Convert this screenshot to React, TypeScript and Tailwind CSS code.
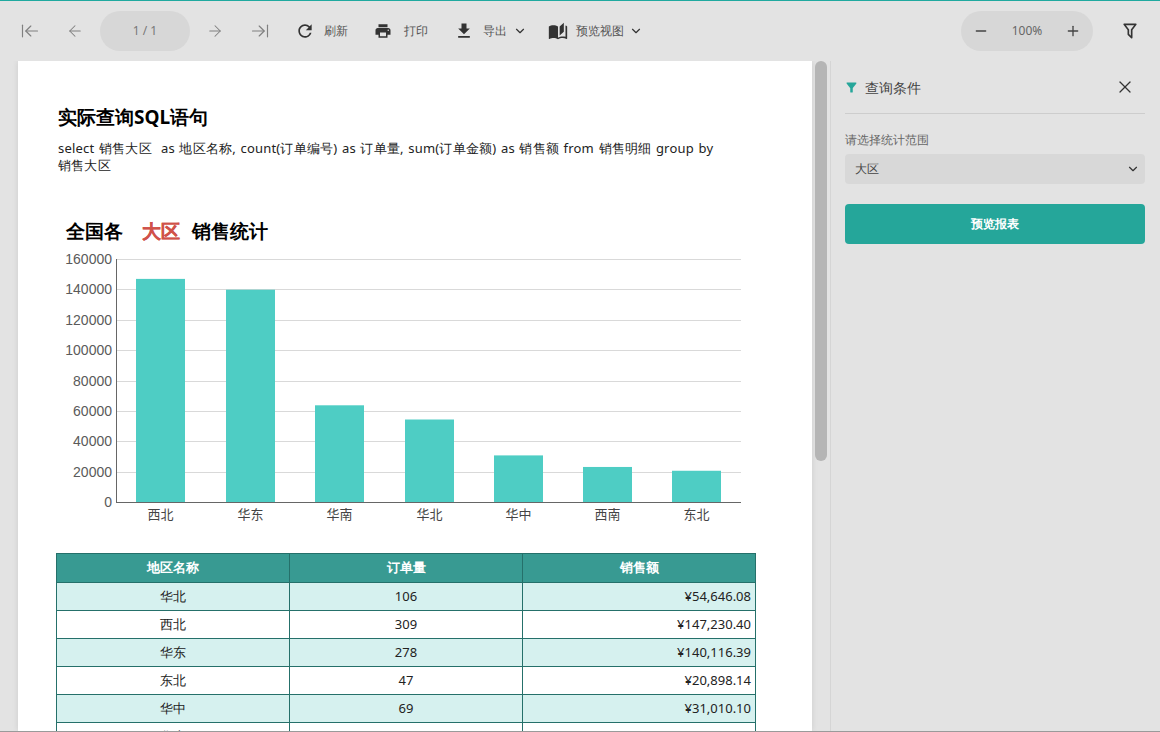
import { ArrowLeft, ArrowRight, ArrowLeftToLine, ArrowRightToLine, ChevronDown, Minus, Plus, X } from "lucide-react";
import { MdPrint, MdFileDownload, MdFilterAlt, MdRefresh } from "react-icons/md";

const font = "font-['Open_Sans','Noto_Sans_CJK_SC',sans-serif]";

const bars = [
  { name: "西北", value: 147230, x: 136 },
  { name: "华东", value: 140116, x: 226 },
  { name: "华南", value: 64000, x: 315 },
  { name: "华北", value: 54646, x: 405 },
  { name: "华中", value: 31010, x: 494 },
  { name: "西南", value: 23400, x: 583 },
  { name: "东北", value: 20898, x: 672 },
];

const ticks = [160000, 140000, 120000, 100000, 80000, 60000, 40000, 20000, 0];

const rows = [
  ["华北", "106", "¥54,646.08"],
  ["西北", "309", "¥147,230.40"],
  ["华东", "278", "¥140,116.39"],
  ["东北", "47", "¥20,898.14"],
  ["华中", "69", "¥31,010.10"],
  ["华南", "118", "¥63,836.78"],
];

function Chart() {
  // svg origin is at 56,250 on the page
  const y0 = 252.5;
  const h = 243;
  return (
    <svg width="700" height="278" className="block" style={{ fontFamily: "'Liberation Sans','Noto Sans CJK SC',sans-serif" }}>
      {ticks.map((t, i) => {
        const y = 9.5 + Math.round((i * h) / 8);
        return (
          <g key={t}>
            {t !== 0 && <line x1="60" x2="685" y1={y} y2={y} stroke="#d9d9d9" />}
            <text x="56" y={y + 4.5} textAnchor="end" fontSize="14" fill="#5a5a5a">
              {t}
            </text>
          </g>
        );
      })}
      {bars.map((b) => {
        const bh = (b.value / 160000) * h;
        return (
          <g key={b.name}>
            <rect x={b.x - 56} y={y0 - bh} width="49" height={bh} fill="#4ecdc4" />
            <text x={b.x - 56 + 24.5} y="269" textAnchor="middle" fontSize="13" fill="#444">
              {b.name}
            </text>
          </g>
        );
      })}
      <line x1="60.5" x2="60.5" y1="9" y2={y0} stroke="#666" />
      <line x1="60" x2="685" y1={y0} y2={y0} stroke="#666" />
    </svg>
  );
}

function ToolText({ children }: { children: string }) {
  return <span className="text-xs text-[#555]">{children}</span>;
}

export default function App() {
  return (
    <div className={`h-screen flex flex-col overflow-hidden bg-[#e3e3e3] border-t border-[#1fa99f] border-b border-b-[#9a9a9a] ${font}`}>
      <div className="h-[60px] shrink-0 flex items-center text-[#808080]">
        <div className="w-[60px] flex justify-center"><ArrowLeftToLine size={20} strokeWidth={1.4} /></div>
        <div className="w-[30px] flex justify-center"><ArrowLeft size={18} strokeWidth={1.4} /></div>
        <div className="ml-[10px] w-[90px] h-10 rounded-full bg-[#d7d7d7] flex items-center justify-center text-xs text-[#777]">1 / 1</div>
        <div className="w-[50px] flex justify-center"><ArrowRight size={18} strokeWidth={1.4} /></div>
        <div className="w-[42px] flex justify-center -ml-[1px]"><ArrowRightToLine size={20} strokeWidth={1.4} /></div>
        <div className="ml-[14px] flex items-center gap-[9px] text-[#333]">
          <MdRefresh size={20} />
          <ToolText>刷新</ToolText>
        </div>
        <div className="ml-[26px] flex items-center gap-[12px] text-[#333]">
          <MdPrint size={18} />
          <ToolText>打印</ToolText>
        </div>
        <div className="ml-[26px] flex items-center gap-[9px] text-[#333]">
          <MdFileDownload size={20} />
          <ToolText>导出</ToolText>
          <ChevronDown size={14} className="-ml-[3px]" />
        </div>
        <div className="ml-[21px] flex items-center gap-[8px] text-[#333]">
          <svg width="20" height="20" viewBox="0 0 24 24" fill="currentColor">
            <path d="M19 2L14 6.5V17.5L19 13V2M6.5 5C4.55 5 2.45 5.4 1 6.5V21.16C1 21.41 1.25 21.66 1.5 21.66C1.6 21.66 1.65 21.59 1.75 21.59C3.1 20.94 5.05 20.5 6.5 20.5C8.45 20.5 10.55 20.9 12 22C13.35 21.15 15.8 20.5 17.5 20.5C19.15 20.5 20.85 20.81 22.25 21.56C22.35 21.61 22.4 21.59 22.5 21.59C22.75 21.59 23 21.34 23 21.09V6.5C22.4 6.05 21.75 5.75 21 5.5V19C19.9 18.65 18.7 18.5 17.5 18.5C15.8 18.5 13.35 19.15 12 20V6.5C10.55 5.4 8.45 5 6.5 5Z" />
          </svg>
          <ToolText>预览视图</ToolText>
          <ChevronDown size={14} className="-ml-[3px]" />
        </div>
        <div className="ml-auto w-[132px] h-10 rounded-full bg-[#d7d7d7] flex items-center justify-between px-3 text-[#444]">
          <Minus size={16} />
          <span className="text-xs text-[#666]">100%</span>
          <Plus size={16} />
        </div>
        <div className="w-[67px] pl-[7px] flex justify-center text-[#333]">
          <svg width="20" height="20" viewBox="0 0 24 24" fill="currentColor">
            <path d="M15,19.88C15.04,20.18 14.94,20.5 14.71,20.71C14.32,21.1 13.69,21.1 13.3,20.71L9.29,16.7C9.06,16.47 8.96,16.16 9,15.87V10.75L4.21,4.62C3.87,4.19 3.95,3.56 4.38,3.22C4.57,3.08 4.78,3 5,3V3H19V3C19.22,3 19.43,3.08 19.62,3.22C20.05,3.56 20.13,4.19 19.79,4.62L15,10.75V19.88M7.04,5L11,10.06V15.58L13,17.58V10.05L16.96,5H7.04Z" />
          </svg>
        </div>
      </div>

      <div className="flex-1 flex min-h-0">
        <div className="flex-1 flex min-w-0 overflow-hidden">
          <div className="ml-[18px] w-[794px] shrink-0 bg-white pl-10 pt-[42px] shadow-[0_0_6px_rgba(0,0,0,0.1)] text-black">
            <h2 className="text-[19px] font-bold leading-[28px]">实际查询SQL语句</h2>
            <p className="mt-[9px] w-[660px] text-[13px] leading-[17px] tracking-[0.2px] [word-spacing:1px] text-[#222]">
              select 销售大区&nbsp;&nbsp;as 地区名称, count(订单编号) as 订单量, sum(订单金额) as 销售额 from 销售明细 group by 销售大区
            </p>
            <div className="mt-[40px] ml-2 h-[34px] flex items-center text-[18.5px] font-bold">
              <span>全国各</span>
              <span className="ml-[19px] text-[#d0524a] [-webkit-text-stroke:0.3px]">大区</span>
              <span className="ml-[12px]">销售统计</span>
            </div>
            <div className="-ml-[2px] mt-[2px]"><Chart /></div>
            <table className="-ml-[2px] mt-[25px] w-[700px] table-fixed border-collapse text-[13px]">
              <thead>
                <tr className="h-[29px] bg-[#389a92] text-white font-bold">
                  <th className="border border-[#25706a] w-[233px] font-bold">地区名称</th>
                  <th className="border border-[#25706a] w-[233px] font-bold">订单量</th>
                  <th className="border border-[#25706a] font-bold">销售额</th>
                </tr>
              </thead>
              <tbody>
                {rows.map((r, i) => (
                  <tr key={i} className={`h-7 ${i % 2 === 0 ? "bg-[#d6f1ef]" : "bg-white"} text-[#222]`}>
                    <td className="border border-[#25706a] text-center pt-px">{r[0]}</td>
                    <td className="border border-[#25706a] text-center pt-px">{r[1]}</td>
                    <td className="border border-[#25706a] text-right pr-1 pt-px">{r[2]}</td>
                  </tr>
                ))}
              </tbody>
            </table>
          </div>
          <div className="ml-[3px] w-[12px] h-[400px] rounded-full bg-[#b5b5b5] shrink-0" />
        </div>

        <div className="w-[330px] shrink-0 border-l border-[#d5d5d5] pl-[14px] pr-[15px]">
          <div className="h-[53px] flex items-center border-b border-[#cdcdcd] pt-[2px]">
            <MdFilterAlt size={15} className="text-[#26a69a] -ml-[1px] mb-[2px]" />
            <span className="ml-[6px] text-sm text-[#444]">查询条件</span>
            <X size={20} strokeWidth={1.5} className="ml-auto mr-[10px] mb-[2px] text-[#333]" />
          </div>
          <div className="mt-[19px] text-xs leading-[14px] text-[#666]">请选择统计范围</div>
          <div className="mt-[7px] h-[30px] rounded-sm bg-[#d8d8d8] flex items-center justify-between pl-[10px] pr-[5px] text-xs text-[#444]">
            大区
            <ChevronDown size={14} className="text-[#333]" />
          </div>
          <button className="mt-5 w-full h-10 rounded-sm bg-[#25a69a] text-white text-xs font-bold">预览报表</button>
        </div>
      </div>
    </div>
  );
}
